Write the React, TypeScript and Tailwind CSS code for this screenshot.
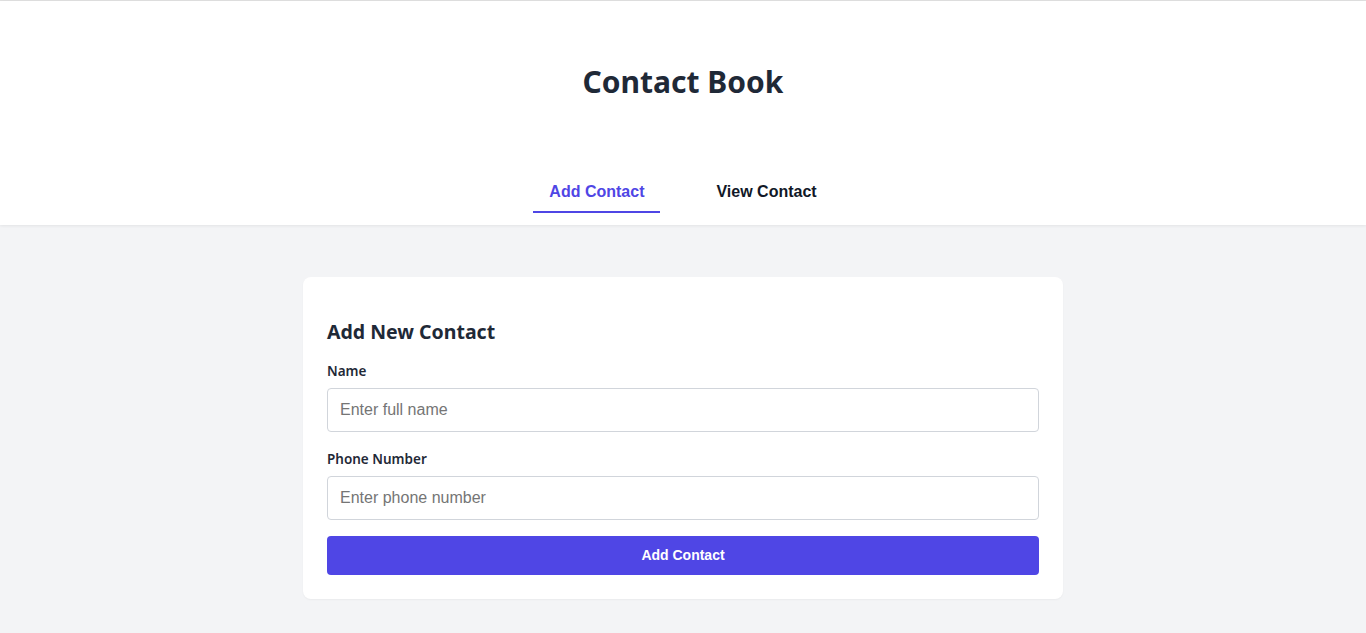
import { useState } from 'react';

type Tab = 'add' | 'view';

export default function App() {
  const [tab, setTab] = useState<Tab>('add');
  const [name, setName] = useState('');
  const [phone, setPhone] = useState('');

  return (
    <div className="min-h-screen bg-[#f3f4f6] border-t border-[#e0e0e0] font-['Noto_Sans',sans-serif]">
      <header className="bg-white shadow-[0_1px_3px_rgba(0,0,0,0.07)] pt-[63px] pb-3">
        <h1 className="text-center text-[30px] leading-9 font-bold text-[#1f2937]">Contact Book</h1>
        <nav className="mt-[71px] flex justify-center gap-10 font-['Liberation_Sans',Arial,sans-serif]">
          <button
            onClick={() => setTab('add')}
            className={`px-4 pt-[9px] pb-[7px] text-base font-bold border-b-2 ${
              tab === 'add' ? 'text-[#4f46e5] border-[#4f46e5]' : 'text-[#111827] border-transparent'
            }`}
          >
            Add Contact
          </button>
          <button
            onClick={() => setTab('view')}
            className={`px-4 pt-[9px] pb-[7px] text-base font-bold border-b-2 ${
              tab === 'view' ? 'text-[#4f46e5] border-[#4f46e5]' : 'text-[#111827] border-transparent'
            }`}
          >
            View Contact
          </button>
        </nav>
      </header>

      <main className="pt-[52px] px-4">
        <div className="mx-auto max-w-[760px] bg-white rounded-lg shadow-[0_1px_2px_rgba(0,0,0,0.04)] px-6 pt-[41px] pb-6">
          <h2 className="text-[19.5px] leading-7 font-bold text-[#1f2937] mb-[15px]">Add New Contact</h2>
          <form onSubmit={e => e.preventDefault()}>
            <label className="block text-[13.5px] leading-5 font-semibold text-[#1f2937] mb-[7px]">Name</label>
            <input
              value={name}
              onChange={e => setName(e.target.value)}
              placeholder="Enter full name"
              className="block w-full h-11 px-3 border border-[#d1d5db] rounded-[4px] text-base text-[#111827] placeholder:text-[#757575] font-['Liberation_Sans',Arial,sans-serif] mb-[17px]"
            />
            <label className="block text-[13.5px] leading-5 font-semibold text-[#1f2937] mb-[7px]">Phone Number</label>
            <input
              value={phone}
              onChange={e => setPhone(e.target.value)}
              placeholder="Enter phone number"
              className="block w-full h-11 px-3 border border-[#d1d5db] rounded-[4px] text-base text-[#111827] placeholder:text-[#757575] font-['Liberation_Sans',Arial,sans-serif] mb-4"
            />
            <button
              type="submit"
              className="w-full h-[39px] pb-[2px] rounded-[4px] bg-[#4f46e5] text-white text-sm font-bold font-['Liberation_Sans',Arial,sans-serif]"
            >
              Add Contact
            </button>
          </form>
        </div>
      </main>
    </div>
  );
}
